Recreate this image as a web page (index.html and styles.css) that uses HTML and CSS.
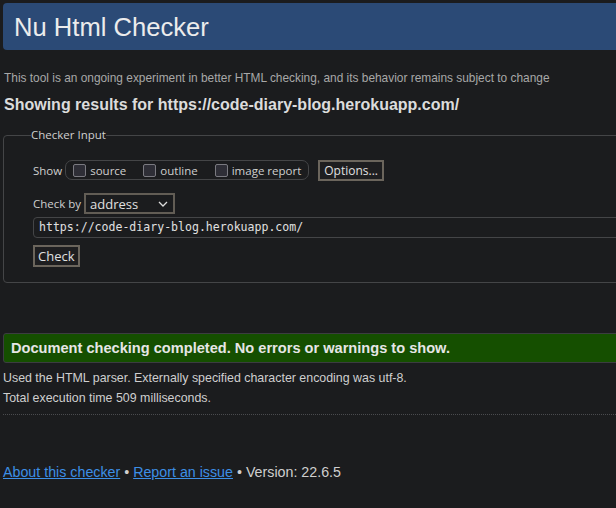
FILE: index.html
```html
<!DOCTYPE html>
<html>
<head>
<meta charset="utf-8">
<title>Nu Html Checker</title>
<link rel="stylesheet" href="styles.css">
</head>
<body>
<h1 class="title">Nu Html Checker</h1>
<p class="intro">This tool is an ongoing experiment in better HTML checking, and its behavior remains subject to change</p>
<h2 class="results">Showing results for https://code-diary-blog.herokuapp.com/</h2>
<fieldset class="checker">
  <legend class="legend">Checker Input</legend>
  <div class="show-row">
    <span class="label">Show</span>
    <span class="show-group">
      <label class="opt"><span class="box"></span>source</label>
      <label class="opt"><span class="box"></span>outline</label>
      <label class="opt"><span class="box"></span>image report</label>
    </span>
    <span class="btn">Options...</span>
  </div>
  <div class="by-row">
    <span class="label">Check by</span>
    <span class="select">address<svg class="chev" width="10" height="6" viewBox="0 0 10 6"><path d="M1 1l4 4 4-4" fill="none" stroke="#ddd" stroke-width="1.3"/></svg></span>
  </div>
  <div class="url">https://code-diary-blog.herokuapp.com/</div>
  <div class="check-row"><span class="btn">Check</span></div>
</fieldset>
<div class="success">Document checking completed. No errors or warnings to show.</div>
<p class="info first">Used the HTML parser. Externally specified character encoding was utf-8.</p>
<p class="info">Total execution time 509 milliseconds.</p>
<hr class="dots">
<p class="footer"><a href="#">About this checker</a> • <a href="#">Report an issue</a> • Version: 22.6.5</p>
</body>
</html>
```
FILE: styles.css
```css
html {
  overflow: hidden;
  background: #1b1c1e;
}
body {
  margin: 3px -40px 0 3px;
  background: #1b1c1e;
  color: #d6d6d6;
  font-family: "Liberation Sans", Arial, sans-serif;
}
.title {
  margin: 0;
  height: 47px;
  box-sizing: border-box;
  padding: 8px 11px 0;
  background: #2b4a76;
  border-radius: 4px;
  color: #ececec;
  font-weight: normal;
  font-size: 25.6px;
  line-height: 32px;
}
.intro {
  margin: 21px 0 0 1px;
  font-size: 11.9px;
  line-height: 14px;
  color: #a8a8a8;
}
.results {
  margin: 10px 0 0 1px;
  font-size: 16px;
  line-height: 20px;
  color: #dcdcdc;
}
.checker {
  margin: 12px 0 0 0;
  padding: 16px 0 15px 29px;
  border: 1px solid #444547;
  border-radius: 4px;
  font-family: "Open Sans", "Noto Sans", sans-serif;
  font-size: 11.5px;
  color: #cfcfcf;
}
.legend {
  padding: 0;
  margin-left: -2px;
  line-height: 16px;
}
.show-row {
  display: flex;
  align-items: center;
  height: 22px;
}
.label {
  margin-right: 3px;
}
.show-group {
  display: flex;
  align-items: center;
  height: 18px;
  border: 1px solid #444547;
  border-radius: 7px;
  padding: 0 7px 0 7px;
  gap: 17px;
}
.opt {
  display: flex;
  align-items: center;
  gap: 4px;
  font-size: 11.5px;
}
.box {
  width: 11px;
  height: 11px;
  border: 1px solid #7a7a80;
  border-radius: 2px;
  background: #2e2e36;
}
.btn {
  display: inline-block;
  border: 2px solid #6b655c;
  background: #1e1e20;
  padding: 0 4px;
  line-height: 17px;
  color: #e0e0e0;
  font-size: 12px;
}
.show-row .btn {
  margin-left: 9px;
}
.by-row {
  display: flex;
  align-items: center;
  margin-top: 12px;
  height: 21px;
}
.select {
  display: flex;
  align-items: center;
  justify-content: space-between;
  height: 17px;
  padding: 0 5px 0 4px;
  border: 2px solid #625d55;
  box-sizing: content-box;
  font-size: 13px;
  color: #e0e0e0;
  width: 78px;
}
.url {
  margin-top: 3px;
  height: 19px;
  border: 1px solid #444547;
  border-radius: 4px;
  padding: 0 5px;
  font-family: "DejaVu Sans Mono", "Liberation Mono", monospace;
  font-size: 11.55px;
  line-height: 19px;
  color: #e0e0e0;
}
.check-row {
  margin-top: 7px;
}
.check-row .btn {
  font-size: 13px;
  padding: 0 3px;
  line-height: 18px;
}
.success {
  margin-top: 50px;
  height: 28px;
  border: 1px solid #3b3d40;
  border-radius: 3px;
  background: #154f00;
  padding: 0 7px;
  font-size: 14.6px;
  font-weight: bold;
  line-height: 28px;
  color: #e6e6e6;
}
.info {
  margin: 5px 0 0 0;
  font-size: 12.4px;
  line-height: 15px;
  color: #cfcfcf;
}
.info.first {
  margin-top: 8px;
}
.dots {
  margin: 8px 0 0 0;
  border: 0;
  border-top: 1px dotted #4a4b4e;
  height: 0;
}
.footer {
  margin: 49px 0 0 0;
  font-size: 14.25px;
  line-height: 16px;
  color: #cfcfcf;
}
.footer a {
  color: #3d8fe6;
}
```
